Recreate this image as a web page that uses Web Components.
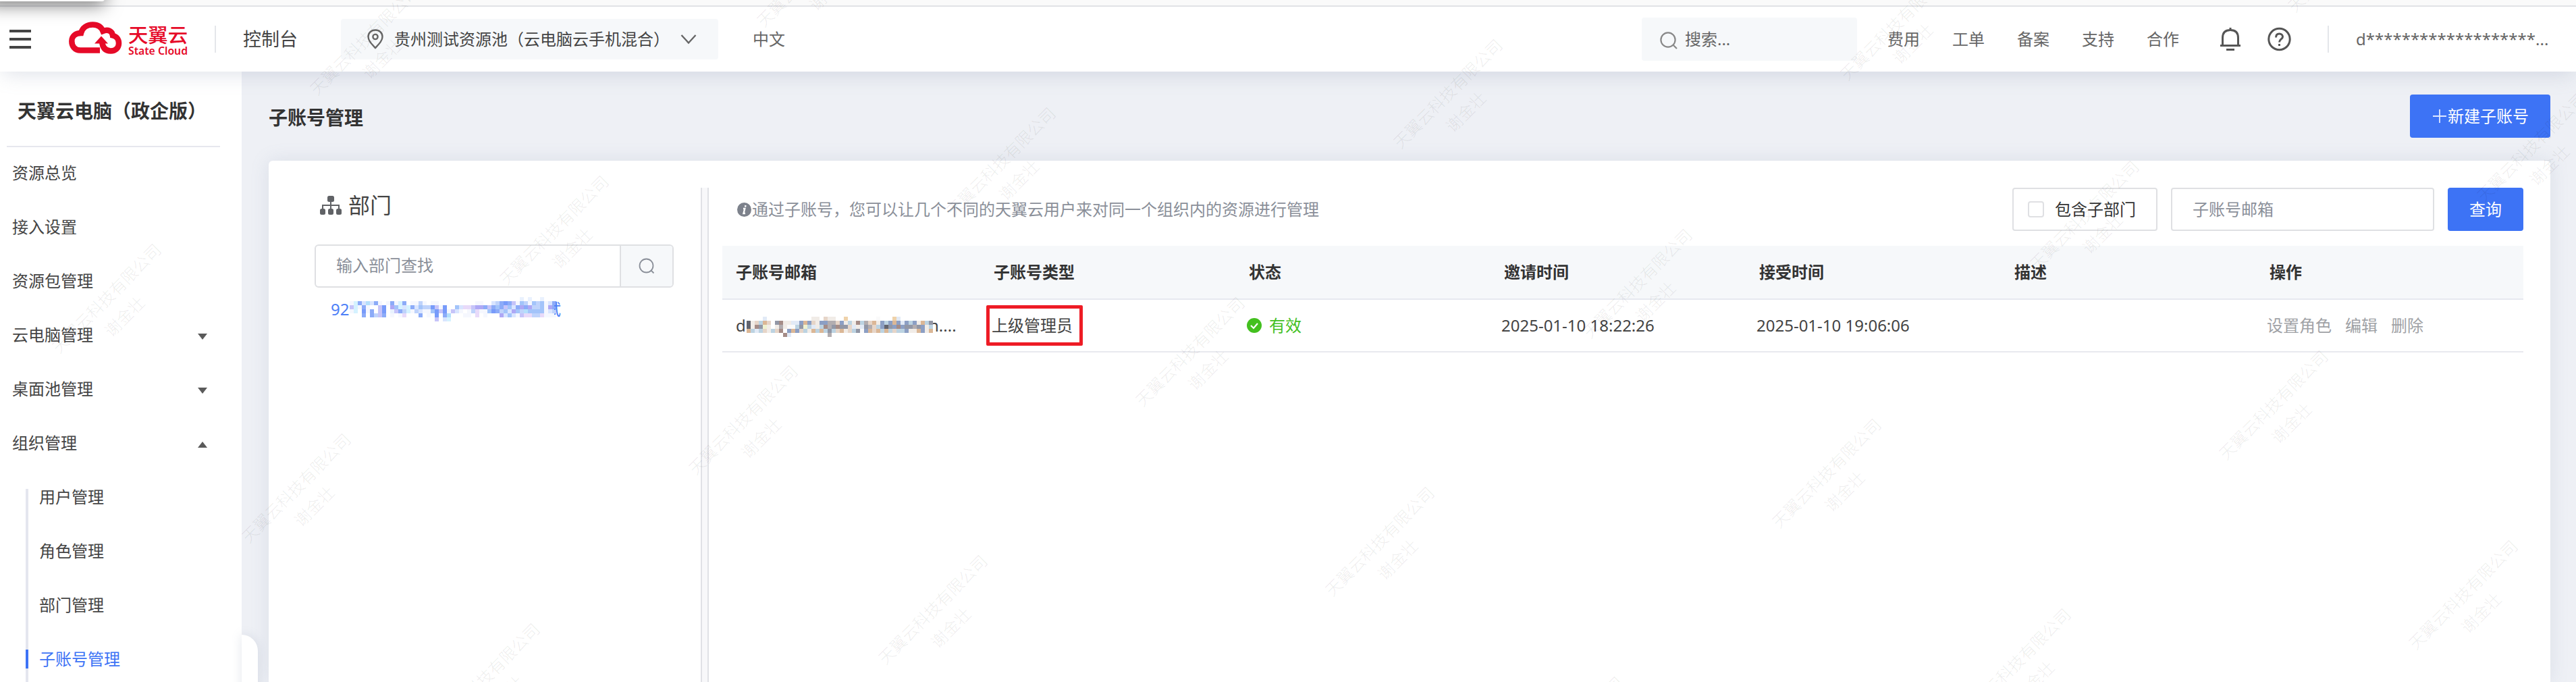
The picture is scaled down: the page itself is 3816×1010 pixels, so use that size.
<!DOCTYPE html>
<html lang="zh-CN">
<head>
<meta charset="utf-8">
<title>子账号管理</title>
<style>
  html, body {
    margin: 0;
    height: 100%;
  }
  body {
    overflow: hidden;
    font: 24px/32px "Noto Sans", "Noto Sans CJK SC", sans-serif;
    color: #444;
    background: #eef0f5;
  }
</style>
</head>
<body>
<console-app>
  <console-header slot="header">
    <region-select>贵州测试资源池（云电脑云手机混合）</region-select>
    <span slot="lang">中文</span>
    <header-search slot="tools">搜索...</header-search>
    <header-links slot="tools">
      <span>费用</span><span>工单</span><span>备案</span><span>支持</span><span>合作</span>
    </header-links>
    <span slot="user">d*******************...</span>
  </console-header>

  <side-menu slot="side">
    <span slot="title">天翼云电脑（政企版）</span>
    <menu-item>资源总览</menu-item>
    <menu-item>接入设置</menu-item>
    <menu-item>资源包管理</menu-item>
    <menu-item caret="down">云电脑管理</menu-item>
    <menu-item caret="down">桌面池管理</menu-item>
    <menu-item caret="up">组织管理</menu-item>
    <menu-item slot="sub" sub>用户管理</menu-item>
    <menu-item slot="sub" sub>角色管理</menu-item>
    <menu-item slot="sub" sub>部门管理</menu-item>
    <menu-item slot="sub" sub active>子账号管理</menu-item>
  </side-menu>

  <account-page>
    <span slot="title">子账号管理</span>
    <blue-button slot="action" plus>新建子账号</blue-button>
    <dept-panel slot="left"></dept-panel>
    <account-list slot="right"></account-list>
  </account-page>
</console-app>
<water-mark></water-mark>

<script>
"use strict";

class ConsoleApp extends HTMLElement {
  constructor() {
    super();
    this.attachShadow({ mode: "open" });
    this.shadowRoot.innerHTML = `
            <style>
                :host {
                    display: flex;
                    flex-direction: column;
                    height: 1010px;
                }
                #strip {
                    height: 8px;
                    background: #fafafa;
                    border-bottom: 2px solid #e1e2e6;
                    position: relative;
                    z-index: 3;
                }
                #popup {
                    position: absolute;
                    left: -20px;
                    top: -30px;
                    width: 175px;
                    height: 32px;
                    border-radius: 4px;
                    background: white;
                    box-shadow: 0 6px 26px rgba(0, 0, 0, 0.5);
                }
                #body {
                    flex: 1;
                    min-height: 0;
                    display: flex;
                }
            </style>
            <div id="strip"><div id="popup"></div></div>
            <slot name="header"></slot>
            <div id="body">
                <slot name="side"></slot>
                <slot></slot>
            </div>
            `;
  }
}

class ConsoleHeader extends HTMLElement {
  constructor() {
    super();
    this.attachShadow({ mode: "open" });
    this.shadowRoot.innerHTML = `
            <style>
                :host {
                    display: flex;
                    align-items: center;
                    height: 96px;
                    box-sizing: border-box;
                    padding: 0 40px 0 14px;
                    background: white;
                    color: #666;
                    position: relative;
                    z-index: 2;
                    box-shadow: 0 8px 28px -4px rgba(120, 135, 165, 0.24);
                }
                svg {
                    display: block;
                    flex: none;
                }
                #burger {
                    width: 32px;
                    height: 28px;
                    display: flex;
                    flex-direction: column;
                    justify-content: space-between;
                }
                #burger i {
                    height: 4px;
                    background: #444;
                }
                #logo {
                    margin-left: 56px;
                }
                .line {
                    width: 2px;
                    height: 40px;
                    background: #e4e6ea;
                    margin-left: 40px;
                }
                #console {
                    font-size: 27px;
                    color: #444;
                    margin: 0 64px 0 40px;
                }
                #lang {
                    margin-left: 51px;
                }
                #tools {
                    margin-left: auto;
                    display: flex;
                    align-items: center;
                    gap: 45px;
                }
                #bell {
                    margin-left: 61px;
                }
                #help {
                    margin-left: 40px;
                }
                #user {
                    width: 286px;
                    margin-left: 40px;
                    white-space: nowrap;
                }
            </style>
            <div id="burger"><i></i><i></i><i></i></div>
            <svg id="logo" width="178" height="52" viewBox="0 0 178 52">
                <path d="M46 42.500H17C9 42.500 4.300 36.500 4.300 29C4.300 21.500 10 17 18 17C20 9 27 4.500 35.500 4.500C43 4.500 48 8 50.500 14C58 11 64 14 65 20.500C71 22 74 26.500 74 32C74 39 69 43.500 62 43.500C53.500 43.500 49.500 38 49 28" fill="none" stroke="#e60a28" stroke-width="8.500"/>
                <path d="M48 21.500L58 32.500H38Z" fill="#e60a28"/>
                <g fill="#e60a28" font-family="Noto Sans CJK SC, sans-serif">
                    <text x="88" y="31" font-size="29" font-weight="500" textLength="88" lengthAdjust="spacingAndGlyphs">天翼云</text>
                    <text x="88" y="48.500" font-size="15.500" font-weight="600" font-family="Noto Sans, sans-serif" textLength="88" lengthAdjust="spacingAndGlyphs">State Cloud</text>
                </g>
            </svg>
            <div class="line" style="margin-left:38px"></div>
            <div id="console">控制台</div>
            <slot></slot>
            <div id="lang"><slot name="lang"></slot></div>
            <div id="tools"><slot name="tools"></slot></div>
            <svg id="bell" width="30" height="36" viewBox="0 0 30 36" fill="none" stroke="#555" stroke-width="3">
                <path d="M3.500 27V16C3.500 8 8 4.500 15 4.500S26.500 8 26.500 16V27M0 27.500H30M15 1V5M9 33.500H21"/>
            </svg>
            <svg id="help" width="35" height="36" viewBox="0 0 35 36" fill="none" stroke="#555" stroke-width="3">
                <circle cx="17.500" cy="18" r="15.700"/>
                <path d="M12.500 15.500C12.500 11.500 14.500 10 17.500 10S22.500 12 22.500 14.500C22.500 18 17.500 18 17.500 22.500M17.500 25V28"/>
            </svg>
            <div class="line" style="margin-left:54px"></div>
            <div id="user"><slot name="user"></slot></div>
            `;
  }
}

class RegionSelect extends HTMLElement {
  constructor() {
    super();
    this.attachShadow({ mode: "open" });
    this.shadowRoot.innerHTML = `
            <style>
                :host {
                    display: flex;
                    align-items: center;
                    width: 559px;
                    height: 60px;
                    box-sizing: border-box;
                    padding: 0 32px 0 39px;
                    background: #f6f8fa;
                    border-radius: 4px;
                    color: #444;
                    white-space: nowrap;
                }
                #name {
                    margin: 0 auto 0 16px;
                }
            </style>
            <svg width="24" height="30" viewBox="0 0 24 30" fill="none" stroke="#666" stroke-width="2.400">
                <path d="M12 28C6 21.500 1.500 17 1.500 11.500C1.500 5.500 6 1.500 12 1.500S22.500 5.500 22.500 11.500C22.500 17 18 21.500 12 28Z"/>
                <circle cx="12" cy="11.500" r="3.600"/>
            </svg>
            <div id="name"><slot></slot></div>
            <svg width="24" height="16" viewBox="0 0 24 16" fill="none" stroke="#666" stroke-width="2.400">
                <path d="M1.500 2L12 13.500L22.500 2"/>
            </svg>
            `;
  }
}

class HeaderSearch extends HTMLElement {
  constructor() {
    super();
    this.attachShadow({ mode: "open" });
    this.shadowRoot.innerHTML = `
            <style>
                :host {
                    display: flex;
                    align-items: center;
                    gap: 11px;
                    width: 319px;
                    height: 64px;
                    box-sizing: border-box;
                    padding-left: 27px;
                    background: #f6f8fa;
                    border-radius: 4px;
                }
                svg {
                    margin-top: 3px;
                }
            </style>
            <svg width="26" height="26" viewBox="0 0 26 26" fill="none" stroke="#888" stroke-width="2.200">
                <circle cx="12" cy="12" r="10.600"/>
                <path d="M19 19L25 25"/>
            </svg>
            <slot></slot>
            `;
  }
}

class HeaderLinks extends HTMLElement {
  constructor() {
    super();
    this.attachShadow({ mode: "open" });
    this.shadowRoot.innerHTML = `
            <style>
                :host {
                    display: flex;
                    gap: 48px;
                }
            </style>
            <slot></slot>
            `;
  }
}

class SideMenu extends HTMLElement {
  constructor() {
    super();
    this.attachShadow({ mode: "open" });
    this.shadowRoot.innerHTML = `
            <style>
                :host {
                    display: block;
                    flex: none;
                    width: 358px;
                    background: white;
                    position: relative;
                }
                #title {
                    margin: 0 32px -2px 10px;
                    padding: 42px 0 36px 16px;
                    font-size: 28px;
                    font-weight: bold;
                    color: #333;
                    white-space: nowrap;
                    border-bottom: 2px solid #e6e7ee;
                }
                #sub {
                    margin-left: 38px;
                    display: flex;
                }
                #rail {
                    width: 4px;
                    margin-top: 28px;
                    background: #e4e6ef;
                }
                #list {
                    flex: 1;
                    margin-left: -4px;
                }
                #fold {
                    position: absolute;
                    left: 358px;
                    top: 834px;
                    width: 24px;
                    height: 100px;
                    border-radius: 0 24px 0 0;
                    background: white;
                    box-shadow: 0 0 16px rgba(120, 135, 165, 0.2);
                }
            </style>
            <div id="title"><slot name="title"></slot></div>
            <slot></slot>
            <div id="sub">
                <div id="rail"></div>
                <div id="list"><slot name="sub"></slot></div>
            </div>
            <div id="fold"></div>
            `;
  }
}

class MenuItem extends HTMLElement {
  constructor() {
    super();
    this.attachShadow({ mode: "open" });
    this.shadowRoot.innerHTML = `
            <style>
                :host {
                    display: flex;
                    align-items: center;
                    height: 80px;
                    padding: 0 51px 0 18px;
                }
                :host([sub]) {
                    padding: 0;
                }
                #mark {
                    display: none;
                    width: 4px;
                    height: 28px;
                    margin-right: 16px;
                }
                :host([sub]) #mark {
                    display: block;
                }
                :host([active]) {
                    color: #3d73f5;
                }
                :host([active]) #mark {
                    background: #3d73f5;
                }
                #caret {
                    display: none;
                    margin: 5px 0 0 auto;
                    border: 7px solid transparent;
                    border-bottom-width: 0;
                    border-top: 9px solid #5a5a5a;
                }
                :host([caret]) #caret {
                    display: block;
                }
                :host([caret="up"]) #caret {
                    transform: scaleY(-1);
                }
            </style>
            <div id="mark"></div>
            <slot></slot>
            <div id="caret"></div>
            `;
  }
}

class BlueButton extends HTMLElement {
  constructor() {
    super();
    this.attachShadow({ mode: "open" });
    this.shadowRoot.innerHTML = `
            <style>
                :host {
                    display: flex;
                    align-items: center;
                    justify-content: center;
                    height: 64px;
                    padding: 0 32px;
                    background: #3d73f5;
                    color: white;
                    border-radius: 4px;
                    cursor: pointer;
                    white-space: nowrap;
                }
                svg {
                    display: none;
                }
                :host([plus]) svg {
                    display: block;
                }
            </style>
            <svg width="24" height="24" viewBox="0 0 24 24" stroke="#dfe8ff" stroke-width="1.800">
                <path d="M12 2V22M2 12H22"/>
            </svg>
            <slot></slot>
            `;
  }
}

class AccountPage extends HTMLElement {
  constructor() {
    super();
    this.attachShadow({ mode: "open" });
    this.shadowRoot.innerHTML = `
            <style>
                :host {
                    flex: 1;
                    min-width: 0;
                    display: flex;
                    flex-direction: column;
                    padding: 34px 38px 0 40px;
                }
                #top {
                    display: flex;
                    justify-content: space-between;
                    align-items: center;
                    height: 64px;
                }
                #title {
                    padding-top: 4px;
                    font-size: 28px;
                    font-weight: bold;
                    color: #333;
                }
                #card {
                    flex: 1;
                    margin-top: 34px;
                    padding: 40px 40px 0 68px;
                    display: flex;
                    background: white;
                    border-radius: 6px 6px 0 0;
                    box-shadow: 0 0 28px rgba(120, 135, 165, 0.16);
                }
                #split {
                    flex: none;
                    width: 8px;
                    margin: 0 20px 0 40px;
                    border: solid #e0e1e6;
                    border-width: 0 2px;
                    background: #f8f8fa;
                }
            </style>
            <div id="top">
                <div id="title"><slot name="title"></slot></div>
                <slot name="action"></slot>
            </div>
            <div id="card">
                <slot name="left"></slot>
                <div id="split"></div>
                <slot name="right"></slot>
            </div>
            `;
  }
}

class DeptPanel extends HTMLElement {
  constructor() {
    super();
    this.attachShadow({ mode: "open" });
    this.shadowRoot.innerHTML = `
            <style>
                :host {
                    display: block;
                    flex: none;
                    width: 532px;
                }
                #head {
                    display: flex;
                    align-items: center;
                    gap: 10px;
                    height: 52px;
                    padding-left: 8px;
                    font-size: 32px;
                }
                #search {
                    display: flex;
                    height: 60px;
                    margin-top: 32px;
                    border: 2px solid #dfe0e3;
                    border-radius: 6px;
                    overflow: hidden;
                }
                #text {
                    flex: 1;
                    padding: 13px 0 0 30px;
                    color: #8a8f99;
                }
                #go {
                    width: 76px;
                    display: flex;
                    align-items: center;
                    justify-content: center;
                    background: #f6f8fa;
                    border-left: 2px solid #dfe0e3;
                }
                #node {
                    display: flex;
                    margin-top: 16px;
                    padding-left: 24px;
                    color: #4d80f7;
                }
                #num {
                    width: 28px;
                }
                #tail {
                    display: flex;
                    justify-content: flex-end;
                    width: 10px;
                    margin-left: -3px;
                    overflow: hidden;
                }
                pixel-mask {
                    margin-top: -2px;
                }
            </style>
            <div id="head">
                <svg width="32" height="28" viewBox="0 0 32 28" fill="#606266">
                    <rect x="11" y="0" width="10" height="9" rx="2.500"/>
                    <rect x="0" y="19" width="8" height="9" rx="2.500"/>
                    <rect x="12" y="19" width="8" height="9" rx="2.500"/>
                    <rect x="24" y="19" width="8" height="9" rx="2.500"/>
                    <path d="M16 8V20M4 20V14H28V20" fill="none" stroke="#606266" stroke-width="2"/>
                </svg>
                <span>部门</span>
            </div>
            <div id="search">
                <div id="text">输入部门查找</div>
                <div id="go">
                    <svg width="24" height="24" viewBox="0 0 24 24" fill="none" stroke="#8a8f99" stroke-width="1.800">
                        <circle cx="11.500" cy="11.500" r="10"/>
                        <path d="M18 18L22.500 22.500"/>
                    </svg>
                </div>
            </div>
            <div id="node">
                <span id="num">92</span>
                <pixel-mask kind="blue"></pixel-mask>
                <span id="tail">试</span>
            </div>
            `;
  }
}

const MASKS = {
  blue: {
    colors: {
      w: "#f5f7fe", a: "#e9f1fe", b: "#d9e5ff", c: "#bfd3fb", d: "#a3c4fa", e: "#8cabf8", f: "#789bfa",
      p: "#c6c4f9", q: "#aea8f5", r: "#e8daf9", s: "#d5f2ff", t: "#b4dffb",
    },
    rows: [
      "..........................................a.a..a...",
      "wsebtbew.wewse.wwcw.ww.........ww..bcefepwdcwdcdwbe",
      "pswew..pf.qdsbsebdccfpwf..dbrrpqqepedepdbeqeqccdwqe",
      "ws.fwe.pf.apecswcbwwdfpfwpbw.wcrwwdfecdbqdctddddwbc",
      "...e.ecpe.w.wr...e.w.f.et...ww.r.w...qbdbwprrccrwww",
      ".....................p.bs..........................",
    ],
  },
  grey: {
    colors: {
      k: "#62646e", g: "#9297a6", h: "#b2adb0", n: "#a58c87", o: "#dbb796", O: "#efd2aa", u: "#e6d5c8",
      v: "#f1ece7", y: "#eef1cf", l: "#bcd3e2", m: "#8c9fc4", a: "#e2eaf6", w: "#fafafa",
    },
    rows: [
      "....a...........vv.uvv..O.......w...Oa........",
      "kvulou.gnvvaamomuvmmhhumvlvnlhuovmlmomamlmvolg",
      "kvngyv.vhvwwlgylavlnhgngguavaghulmkgmnmgghgmvl",
      "olaluvlun.momulvololgluovulgwmouololullmvvomvo",
      ".........na.........h.........................",
    ],
  },
};

// Masked text: a grid of 6px cells
class PixelMask extends HTMLElement {
  constructor() {
    super();
    this.attachShadow({ mode: "open" });
  }

  connectedCallback() {
    const mask = MASKS[this.getAttribute("kind")];
    const cols = mask.rows[0].length;
    const cells = mask.rows
      .map((row) => [...row].map((c) => `<i style="background:${mask.colors[c] || "none"}"></i>`).join(""))
      .join("");
    this.shadowRoot.innerHTML = `
            <style>
                :host {
                    display: grid;
                    flex: none;
                    grid-template-columns: repeat(${cols}, 6px);
                    grid-auto-rows: 6px;
                    height: 30px;
                }
            </style>
            ${cells}
            `;
  }
}

class AccountList extends HTMLElement {
  constructor() {
    super();
    this.attachShadow({ mode: "open" });
    this.shadowRoot.innerHTML = `
            <style>
                :host {
                    display: block;
                    flex: 1;
                    min-width: 0;
                }
                #bar {
                    display: flex;
                    align-items: center;
                    gap: 20px;
                    height: 64px;
                }
                #tip {
                    display: flex;
                    align-items: center;
                    gap: 1px;
                    margin-right: auto;
                    padding-left: 22px;
                    color: #8a8f99;
                }
                .box {
                    display: flex;
                    align-items: center;
                    box-sizing: border-box;
                    height: 64px;
                    border: 2px solid #dfe0e3;
                    border-radius: 4px;
                }
                #check {
                    width: 215px;
                    padding-left: 21px;
                    gap: 16px;
                    color: #333;
                }
                #check i {
                    width: 20px;
                    height: 20px;
                    border: 2px solid #dfe0e3;
                    border-radius: 4px;
                }
                #mail {
                    width: 390px;
                    padding-left: 30px;
                    color: #8a8f99;
                }
                .row {
                    display: grid;
                    grid-template-columns: 377px repeat(5, 378px) 1fr;
                    align-items: center;
                    height: 76px;
                    border-bottom: 2px solid #e8e9ef;
                    white-space: nowrap;
                }
                .row > div {
                    display: flex;
                    align-items: center;
                    padding-left: 21px;
                }
                .row > div:first-child {
                    padding-left: 20px;
                }
                .row.head {
                    margin-top: 22px;
                    height: 78px;
                    background: #f6f8fa;
                    color: #333;
                    font-weight: bold;
                    border-color: #e6e9ef;
                }
                .head > div:not(:first-child) {
                    padding-left: 25px;
                }
                #frame {
                    box-sizing: border-box;
                    width: 143px;
                    height: 60px;
                    margin-left: -7px;
                    padding-left: 3px;
                    display: flex;
                    align-items: center;
                    border: 5px solid #ee1c25;
                    border-radius: 2px;
                }
                #ok {
                    gap: 11px;
                    padding-left: 22px;
                    color: #43c01f;
                }
                #ops {
                    gap: 20px;
                    color: #a0a2a6;
                }
                #d {
                    width: 16px;
                }
                pixel-mask {
                    margin: 0 -6px -4px 0;
                    position: relative;
                    z-index: 1;
                }
            </style>
            <div id="bar">
                <div id="tip">
                    <svg width="21" height="21" viewBox="0 0 21 21">
                        <circle cx="10.500" cy="10.500" r="10.500" fill="#7d828c"/>
                        <path d="M12.500 4L12 6.500M9 9H11.300L9.500 16H12" fill="none" stroke="white" stroke-width="2.400"/>
                    </svg>
                    <span>通过子账号，您可以让几个不同的天翼云用户来对同一个组织内的资源进行管理</span>
                </div>
                <div id="check" class="box"><i></i>包含子部门</div>
                <div id="mail" class="box">子账号邮箱</div>
                <blue-button>查询</blue-button>
            </div>
            <div class="row head">
                <div>子账号邮箱</div>
                <div>子账号类型</div>
                <div>状态</div>
                <div>邀请时间</div>
                <div>接受时间</div>
                <div>描述</div>
                <div>操作</div>
            </div>
            <div class="row">
                <div><span id="d">d</span><pixel-mask kind="grey"></pixel-mask><span>n....</span></div>
                <div><div id="frame">上级管理员</div></div>
                <div id="ok">
                    <svg width="22" height="22" viewBox="0 0 22 22">
                        <circle cx="11" cy="11" r="11" fill="#43c01f"/>
                        <path d="M6 11L10 15L16 8" fill="none" stroke="white" stroke-width="2.200"/>
                    </svg>
                    <span>有效</span>
                </div>
                <div>2025-01-10 18:22:26</div>
                <div>2025-01-10 19:06:06</div>
                <div></div>
                <div id="ops"><span>设置角色</span><span>编辑</span><span>删除</span></div>
            </div>
            `;
  }
}

class WaterMark extends HTMLElement {
  constructor() {
    super();
    this.attachShadow({ mode: "open" });
    // The marks stand on a skewed lattice over the whole window
    let marks = "";
    for (let n = -2; n < 6; n++) {
      for (let m = -5; m < 6; m++) {
        const x = 1100 + n * 662.3 + m * 280.5;
        const y = 621 - n * 101 + m * 281;
        if (x > -80 && x < 3896 && y > -80 && y < 1090) {
          marks += `<div style="left:${x}px;top:${y}px"><p>天翼云科技有限公司</p><p>谢金壮</p></div>`;
        }
      }
    }
    this.shadowRoot.innerHTML = `
            <style>
                :host {
                    position: absolute;
                    top: 0;
                    left: 0;
                    width: 3816px;
                    height: 1010px;
                    overflow: hidden;
                    pointer-events: none;
                    z-index: 9;
                    color: rgba(0, 0, 0, 0.085);
                    font-family: "Noto Sans CJK SC", sans-serif;
                    font-weight: 300;
                }
                div {
                    position: absolute;
                    width: 240px;
                    margin: -19px 0 0 -120px;
                    text-align: center;
                    line-height: 38px;
                    transform: rotate(-45deg);
                    transform-origin: 50% 19px;
                }
                p {
                    margin: 0;
                }
            </style>
            ${marks}
            `;
  }
}

customElements.define("console-app", ConsoleApp);
customElements.define("console-header", ConsoleHeader);
customElements.define("region-select", RegionSelect);
customElements.define("header-search", HeaderSearch);
customElements.define("header-links", HeaderLinks);
customElements.define("side-menu", SideMenu);
customElements.define("menu-item", MenuItem);
customElements.define("blue-button", BlueButton);
customElements.define("account-page", AccountPage);
customElements.define("pixel-mask", PixelMask);
customElements.define("dept-panel", DeptPanel);
customElements.define("account-list", AccountList);
customElements.define("water-mark", WaterMark);
</script>
</body>
</html>
